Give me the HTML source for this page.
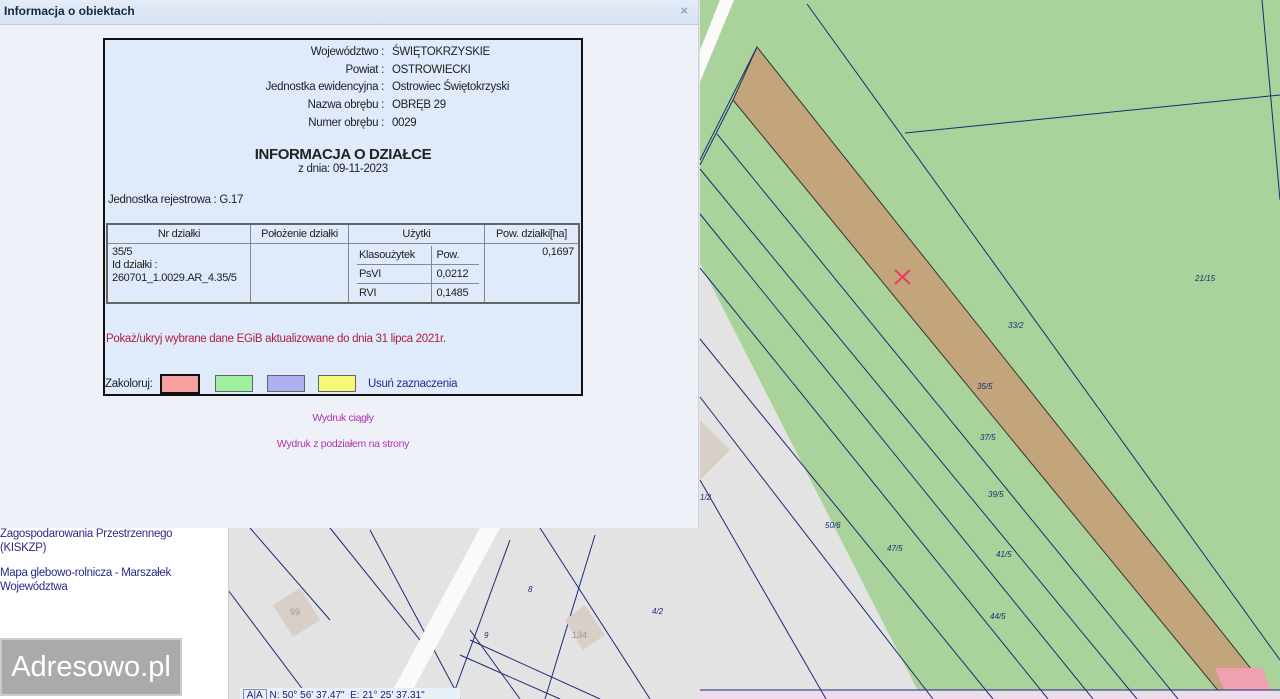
<!DOCTYPE html>
<html><head><meta charset="utf-8"><style>
html,body{margin:0;width:1280px;height:699px;overflow:hidden}
body{position:relative;font-family:"Liberation Sans",Arial,sans-serif;background:#e3e3e3}
.abs{position:absolute}
#dlg{left:0;top:0;width:698px;height:528px;background:#eef2f8;border-right:1px solid #c8d4e4}
#hdr{left:0;top:0;width:698px;height:24px;background:linear-gradient(#e4ecf7,#d7e3f2);border-bottom:1px solid #bccbe0;font-size:12px;font-weight:bold;color:#15283f;line-height:22px;text-indent:4px}
#box{left:103px;top:38px;width:476px;height:354px;border:2px solid #111;background:#dfeafb;font-size:12px;color:#222}
.r{position:absolute;white-space:nowrap;font-size:12px}
.n{font-size:11.5px;letter-spacing:-0.3px}
table{border-collapse:collapse}
</style></head><body>
<svg class="abs" style="left:0;top:0" width="1280" height="699">
<rect x="0" y="0" width="1280" height="699" fill="#e3e3e3"/>
<polygon points="700,0 1280,0 1280,699 922,699 700,263" fill="#a9d39b"/>
<polygon points="700,50 720,0 734,0 700,82" fill="#fafafa"/>
<polygon points="757,47 733,100 1225,699 1275,699" fill="#c3a57c" stroke="#333" stroke-width="1"/>
<polygon points="1215,668 1262,668 1275,699 1228,699" fill="#f0a0b0"/>
<rect x="700" y="690" width="580" height="9" fill="#ecdcec"/>
<g stroke="#1d2a78" stroke-width="1" fill="none">
<line x1="807" y1="4" x2="1280" y2="660"/>
<line x1="905" y1="133" x2="1280" y2="95"/>
<line x1="757" y1="47" x2="700" y2="160"/>
<line x1="733" y1="100" x2="700" y2="165"/>
<line x1="717" y1="134" x2="1178" y2="699"/>
<line x1="700" y1="169" x2="1137" y2="699"/>
<line x1="700" y1="214" x2="1093" y2="699"/>
<line x1="700" y1="268" x2="1048" y2="699"/>
<line x1="700" y1="339" x2="993" y2="699"/>
<line x1="700" y1="397" x2="933" y2="699"/>
<line x1="700" y1="480" x2="826" y2="699"/>
<line x1="1262" y1="0" x2="1280" y2="200"/>
<line x1="700" y1="690" x2="1280" y2="690"/>
<line x1="250" y1="528" x2="330" y2="620"/>
<line x1="330" y1="528" x2="420" y2="640"/>
<line x1="228" y1="590" x2="310" y2="699"/>
<line x1="370" y1="530" x2="460" y2="699"/>
<line x1="540" y1="528" x2="650" y2="699"/>
<line x1="510" y1="540" x2="455" y2="690"/>
<line x1="595" y1="535" x2="545" y2="699"/>
<line x1="470" y1="640" x2="600" y2="699"/>
<line x1="460" y1="655" x2="560" y2="699"/>
<line x1="470" y1="630" x2="520" y2="699"/>
</g>
<polygon points="480,528 500,528 408,699 388,699" fill="#fafafa"/>
<polygon points="273,605 300,588 320,620 293,637" fill="#d8cfc7"/>
<text x="290" y="615" font-size="9" fill="#999">99</text>
<polygon points="565,620 585,605 605,635 583,650" fill="#d8cfc7"/>
<text x="572" y="638" font-size="9" fill="#999">134</text>
<polygon points="700,420 730,450 700,480" fill="#d8cfc7"/>
<line x1="895" y1="270" x2="910" y2="284" stroke="#e83a6a" stroke-width="2"/>
<line x1="910" y1="270" x2="895" y2="284" stroke="#e83a6a" stroke-width="2"/>
<g font-size="8" font-style="italic" fill="#1d2a78">
<text x="1008" y="328">33/2</text><text x="977" y="389">35/5</text><text x="980" y="440">37/5</text>
<text x="988" y="497">39/5</text><text x="996" y="557">41/5</text><text x="990" y="619">44/5</text>
<text x="887" y="551">47/5</text><text x="825" y="528">50/6</text><text x="1195" y="281">21/15</text>
<text x="700" y="500">1/2</text><text x="528" y="592">8</text><text x="484" y="638">9</text><text x="652" y="614">4/2</text>
</g>
</svg>
<div class="abs" style="left:0;top:528px;width:228px;height:171px;background:#fff;border-right:1px solid #ccc"></div>
<div class="r n" style="left:0;top:527px;color:#2a2a8a;line-height:14px">Zagospodarowania Przestrzennego<br>(KISKZP)</div>
<div class="r n" style="left:0;top:566px;color:#2a2a8a;line-height:14px">Mapa glebowo-rolnicza - Marszałek<br>Województwa</div>
<div class="abs" style="left:0;top:638px;width:178px;height:54px;background:#aaa;border:2px solid #ccc;color:#fff;font-size:29px;line-height:54px;text-align:center">Adresowo.pl</div>
<div class="abs" style="left:240px;top:688px;width:220px;height:11px;background:#e8f0f8;font-size:10px;color:#1a1a80;white-space:nowrap;line-height:16px">&nbsp;<span style="border:1px solid #88a;padding:0 3px">A|A</span> N: 50° 56' 37.47" &nbsp;E: 21° 25' 37.31"</div>
<div id="dlg" class="abs">
<div id="hdr" class="abs">Informacja o obiektach<span style="position:absolute;right:10px;top:0;color:#8aa3c3;font-size:13px">×</span></div>
<div id="box" class="abs">
<div class="r n" style="right:197px;top:4px;line-height:17.7px;text-align:right">Województwo :<br>Powiat :<br>Jednostka ewidencyjna :<br>Nazwa obrębu :<br>Numer obrębu :</div>
<div class="r n" style="left:287px;top:4px;line-height:17.7px">ŚWIĘTOKRZYSKIE<br>OSTROWIECKI<br>Ostrowiec Świętokrzyski<br>OBRĘB 29<br>0029</div>
<div class="r" style="left:0;width:476px;top:106px;text-align:center;font-weight:bold;font-size:15px;letter-spacing:-0.4px">INFORMACJA O DZIAŁCE</div>
<div class="r n" style="left:0;width:476px;top:123px;text-align:center">z dnia: 09-11-2023</div>
<div class="r n" style="left:3px;top:154px">Jednostka rejestrowa : G.17</div>
<table class="abs n" style="left:1px;top:183px;width:474px;height:81px;border:2px solid #666;font-size:11px">
<tr style="height:19px;text-align:center"><td style="border:1px solid #888;width:140px">Nr działki</td><td style="border:1px solid #888;width:95px">Położenie działki</td><td style="border:1px solid #888;width:133px">Użytki</td><td style="border:1px solid #888">Pow. działki[ha]</td></tr>
<tr><td style="border:1px solid #888;vertical-align:top;padding:2px 4px;line-height:13px">35/5<br>Id działki :<br>260701_1.0029.AR_4.35/5</td><td style="border:1px solid #888"></td>
<td style="border:1px solid #888;padding:2px 0 0 8px;vertical-align:top"><table style="font-size:11px;width:122px"><tr style="height:19px"><td style="border-right:1px solid #888;border-bottom:1px solid #888;padding-left:2px">Klasoużytek</td><td style="border-bottom:1px solid #888;padding-left:4px">Pow.</td></tr><tr style="height:19px"><td style="border-right:1px solid #888;border-bottom:1px solid #888;padding-left:2px">PsVI</td><td style="border-bottom:1px solid #888;padding-left:4px">0,0212</td></tr><tr style="height:18px"><td style="border-right:1px solid #888;padding-left:2px">RVI</td><td style="padding-left:4px">0,1485</td></tr></table></td>
<td style="border:1px solid #888;vertical-align:top;text-align:right;padding:2px 4px">0,1697</td></tr></table>
<div class="r n" style="left:1px;top:293px;color:#b0203a">Pokaż/ukryj wybrane dane EGiB aktualizowane do dnia 31 lipca 2021r.</div>
<div class="r n" style="left:0;top:338px">Zakoloruj:</div>
<div class="abs" style="left:55px;top:334px;width:36px;height:16px;background:#f8a0a0;border:2px solid #111"></div>
<div class="abs" style="left:110px;top:335px;width:36px;height:15px;background:#9ef09e;border:1px solid #666"></div>
<div class="abs" style="left:162px;top:335px;width:36px;height:15px;background:#b0b0f0;border:1px solid #666"></div>
<div class="abs" style="left:213px;top:335px;width:36px;height:15px;background:#f8f878;border:1px solid #666"></div>
<div class="r n" style="left:263px;top:338px;color:#2a2a8a">Usuń zaznaczenia</div>
</div>
<div class="r n" style="left:0;width:686px;top:412px;text-align:center;color:#b030b0;font-size:10.5px">Wydruk ciągły</div>
<div class="r n" style="left:0;width:686px;top:438px;text-align:center;color:#b030b0;font-size:10.5px">Wydruk z podziałem na strony</div>
</div>
</body></html>
